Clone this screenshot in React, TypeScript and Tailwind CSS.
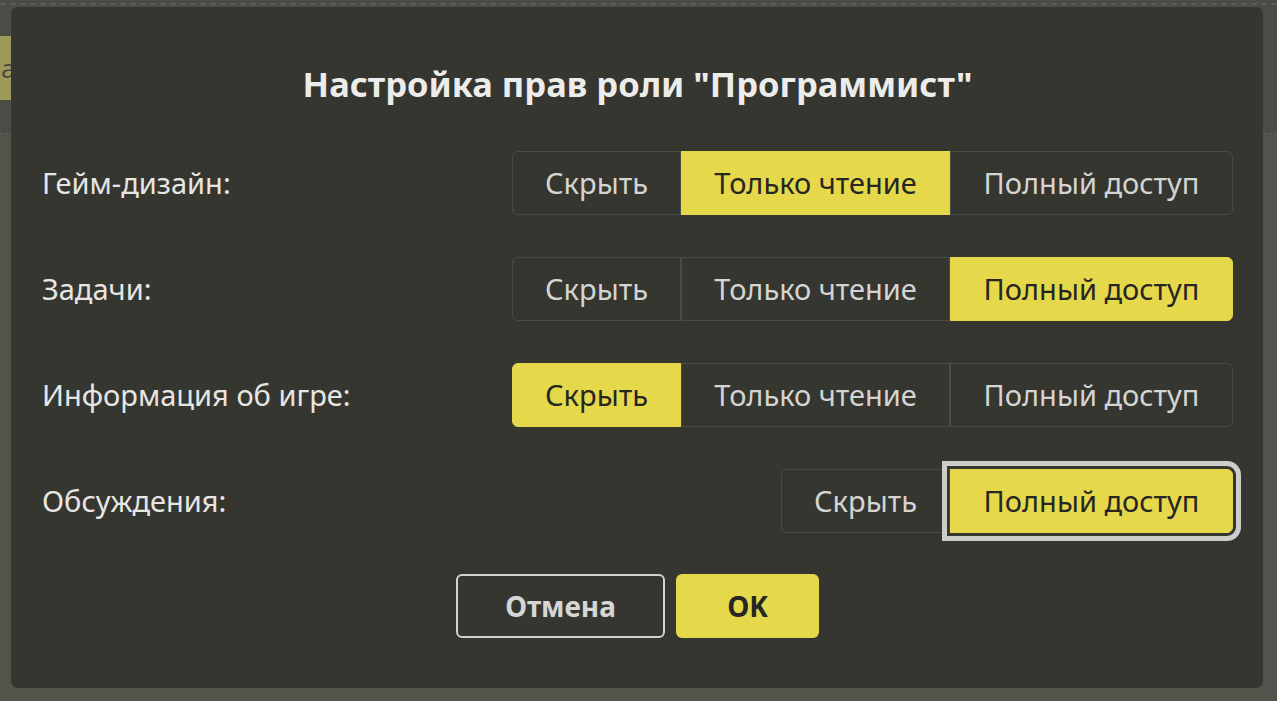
import React from "react";

type Seg = { label: string; w: number };

const SEGS3: Seg[] = [
  { label: "Скрыть", w: 169 },
  { label: "Только чтение", w: 269 },
  { label: "Полный доступ", w: 283 },
];
const SEGS2: Seg[] = [
  { label: "Скрыть", w: 169 },
  { label: "Полный доступ", w: 283 },
];

function Segmented({
  segs,
  selected,
  focused,
}: {
  segs: Seg[];
  selected: number;
  focused?: boolean;
}) {
  return (
    <div className="flex h-[64px]">
      {segs.map((s, i) => {
        const first = i === 0;
        const last = i === segs.length - 1;
        const sel = i === selected;
        const cls = [
          "relative flex h-full items-center justify-center border text-[29px] leading-none",
          first ? "rounded-l-[6px]" : "",
          last ? "rounded-r-[6px]" : "",
          sel
            ? "z-10 border-[#e6d84b] bg-[#e6d84b] text-[#262622]"
            : "border-[#4b4b46] bg-transparent text-[#d4d4d2]",
          sel && focused
            ? "outline-[5px] outline-solid outline-[#cdcdcb] outline-offset-[3px]"
            : "",
        ].join(" ");
        return (
          <div key={s.label} className={cls} style={{ width: s.w }}>
            <span className="-mt-[2px]">{s.label}</span>
          </div>
        );
      })}
    </div>
  );
}

function Row({ label, children }: { label: string; children: React.ReactNode }) {
  return (
    <div className="flex h-[64px] items-center justify-between">
      <div className="text-[29px] leading-none text-[#e6e6e4] -mt-[2px]">{label}</div>
      {children}
    </div>
  );
}

export default function App() {
  return (
    <div
      className="relative h-[701px] w-[1277px] overflow-hidden bg-[#53534c]"
      style={{ fontFamily: '"Noto Sans", "Open Sans", sans-serif' }}
    >
      {/* backdrop page */}
      <div className="flex h-[134px] flex-col bg-[#4c4c46] border-b border-dashed border-[#5f5f59]">
        <div className="mt-[3px] border-t-2 border-dashed border-[#5c5c56]" />
        <div className="mt-[31px] flex h-[64px] w-[60px] items-center bg-[#9f9a5c] pl-[1px] text-[26px] text-[#4a4a44]">
          a
        </div>
      </div>

      {/* dialog */}
      <div className="absolute left-[11px] top-[7px] flex h-[681px] w-[1252px] flex-col rounded-[7px] bg-[#363631] pl-[31px] pr-[30px] pt-[55px]">
        <div className="flex h-[44px] items-center justify-center text-[34.5px] font-bold leading-none text-[#ececea]">
          Настройка прав роли "Программист"
        </div>
        <div className="mt-[45px] flex flex-col gap-[42px]">
          <Row label="Гейм-дизайн:">
            <Segmented segs={SEGS3} selected={1} />
          </Row>
          <Row label="Задачи:">
            <Segmented segs={SEGS3} selected={2} />
          </Row>
          <Row label="Информация об игре:">
            <Segmented segs={SEGS3} selected={0} />
          </Row>
          <Row label="Обсуждения:">
            <Segmented segs={SEGS2} selected={1} focused />
          </Row>
        </div>
        <div className="mt-[41px] flex justify-center gap-[11px]">
          <button className="flex h-[64px] w-[209px] items-center justify-center rounded-[6px] border-2 border-[#d2d2d0] text-[28px] font-bold text-[#d6d6d4]">
            Отмена
          </button>
          <button className="flex h-[64px] w-[143px] items-center justify-center rounded-[6px] bg-[#e6d84b] text-[28px] font-bold text-[#262622]">
            OK
          </button>
        </div>
      </div>
    </div>
  );
}
